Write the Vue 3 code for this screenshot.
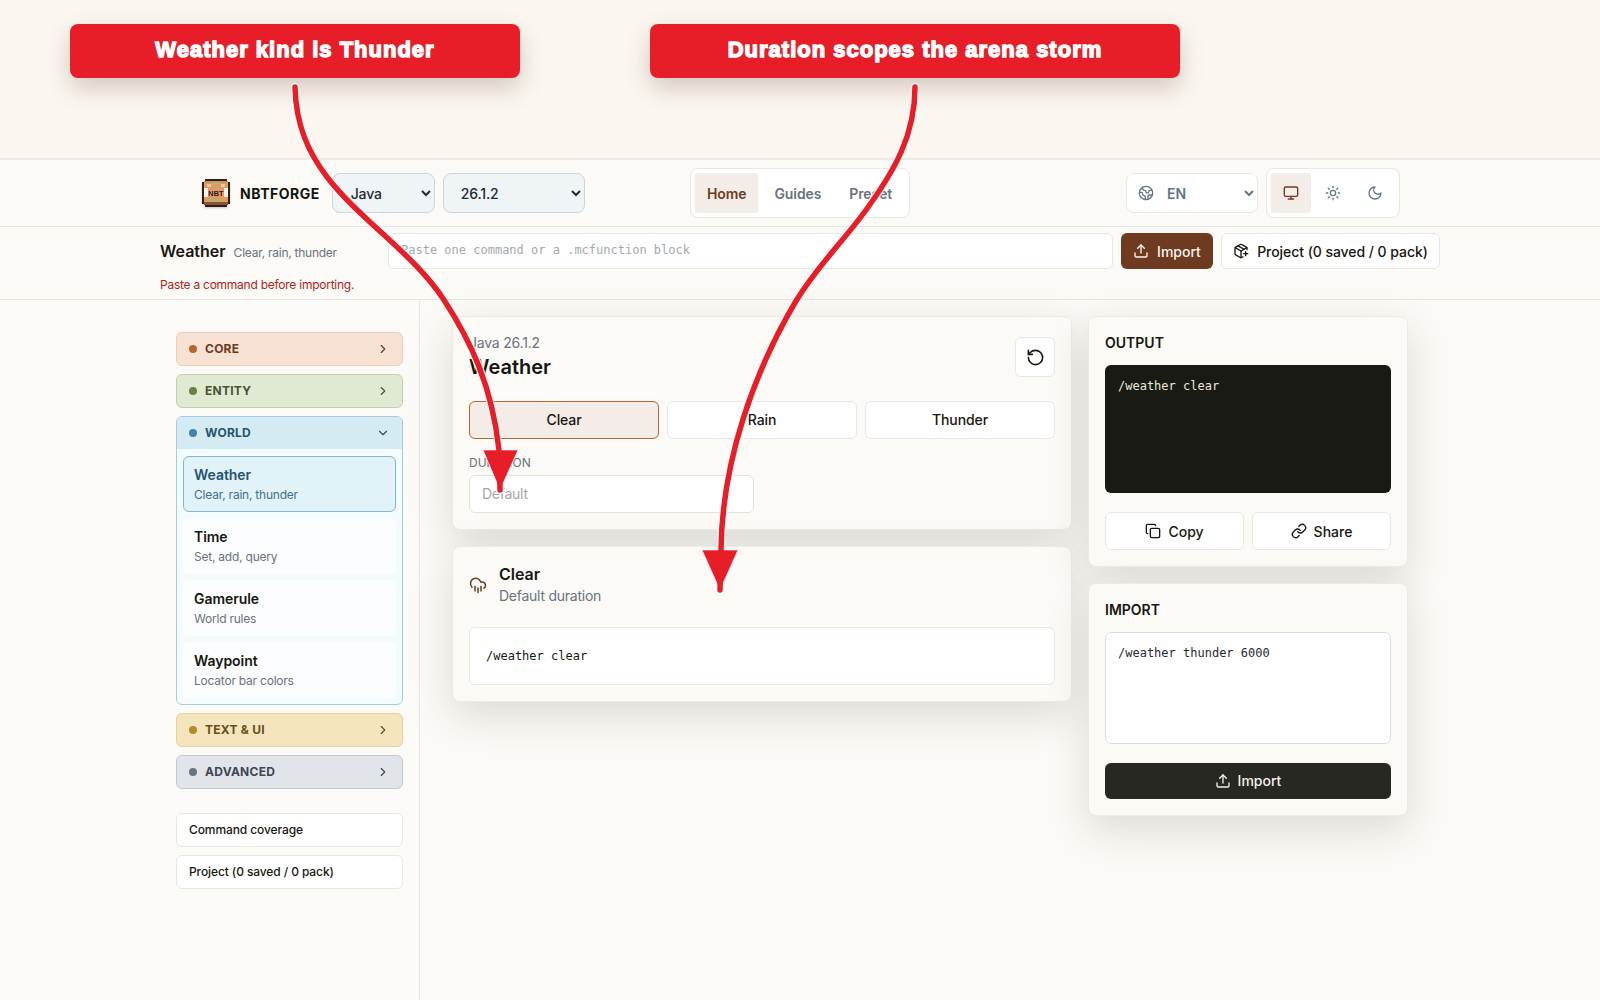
<script setup>
const icons = {
  upload: '<path d="M12 3v12"/><path d="m17 8-5-5-5 5"/><path d="M21 15v4a2 2 0 0 1-2 2H5a2 2 0 0 1-2-2v-4"/>',
  pkg: '<path d="M16 16h6"/><path d="M19 13v6"/><path d="M21 10V8a2 2 0 0 0-1-1.73l-7-4a2 2 0 0 0-2 0l-7 4A2 2 0 0 0 3 8v8a2 2 0 0 0 1 1.73l7 4a2 2 0 0 0 2 0l2-1.14"/><path d="m7.5 4.27 9 5.15"/><polyline points="3.29 7 12 12 20.71 7"/><line x1="12" x2="12" y1="22" y2="12"/>',
  reset: '<path d="M3 12a9 9 0 1 0 9-9 9.75 9.75 0 0 0-6.74 2.74L3 8"/><path d="M3 3v5h5"/>',
  copy: '<rect width="14" height="14" x="8" y="8" rx="2" ry="2"/><path d="M4 16c-1.1 0-2-.9-2-2V4c0-1.1.9-2 2-2h10c1.1 0 2 .9 2 2"/>',
  link: '<path d="M10 13a5 5 0 0 0 7.54.54l3-3a5 5 0 0 0-7.07-7.07l-1.72 1.71"/><path d="M14 11a5 5 0 0 0-7.54-.54l-3 3a5 5 0 0 0 7.07 7.07l1.71-1.71"/>',
  monitor: '<rect width="20" height="14" x="2" y="3" rx="2"/><line x1="8" x2="16" y1="21" y2="21"/><line x1="12" x2="12" y1="17" y2="21"/>',
  sun: '<circle cx="12" cy="12" r="4"/><path d="M12 2v2"/><path d="M12 20v2"/><path d="m4.93 4.93 1.41 1.41"/><path d="m17.66 17.66 1.41 1.41"/><path d="M2 12h2"/><path d="M20 12h2"/><path d="m6.34 17.66-1.41 1.41"/><path d="m19.07 4.93-1.41 1.41"/>',
  moon: '<path d="M12 3a6 6 0 0 0 9 9 9 9 0 1 1-9-9Z"/>',
  earth: '<path d="M21.54 15H17a2 2 0 0 0-2 2v4.54"/><path d="M7 3.34V5a3 3 0 0 0 3 3a2 2 0 0 1 2 2c0 1.1.9 2 2 2a2 2 0 0 0 2-2c0-1.1.9-2 2-2h3.17"/><path d="M11 21.95V18a2 2 0 0 0-2-2a2 2 0 0 1-2-2v-1a2 2 0 0 0-2-2H2.05"/><circle cx="12" cy="12" r="10"/>',
  rain: '<path d="M4 14.899A7 7 0 1 1 15.71 8h1.79a4.5 4.5 0 0 1 2.5 8.242"/><path d="M16 14v6"/><path d="M8 14v6"/><path d="M12 16v6"/>',
  right: '<path d="m9 18 6-6-6-6"/>',
  down: '<path d="m6 9 6 6 6-6"/>'
}
const worldItems = [
  { t: 'Weather', s: 'Clear, rain, thunder', active: true },
  { t: 'Time', s: 'Set, add, query' },
  { t: 'Gamerule', s: 'World rules' },
  { t: 'Waypoint', s: 'Locator bar colors' }
]
const arrows = [
  { d: 'M295 87C296 125 308 152 327 177C360 220 415 255 444 300C470 340 492 385 499 450L500 490', head: '483,450 518,450 500,490' },
  { d: 'M915 87C915 135 895 170 866 210C842 243 818 265 796 301C755 370 722 460 721 550L720 590', head: '702,550 738,550 720,590' }
]
</script>

<template>
  <div class="page">
    <section class="band">
      <div class="callout c1">Weather kind is Thunder</div>
      <div class="callout c2">Duration scopes the arena storm</div>
    </section>

    <header class="top">
      <div class="top-in">
        <div class="left">
          <svg class="logo" viewBox="0 0 28 28" shape-rendering="crispEdges">
            <rect x="3" y="0" width="22" height="28" fill="#2b2119"/>
            <rect x="0" y="3" width="28" height="22" fill="#2b2119"/>
            <rect x="2" y="2" width="24" height="23" fill="#e09b69"/>
            <rect x="3" y="2" width="22" height="2" fill="#cf8c5a"/>
            <rect x="9" y="3" width="10" height="2" fill="#a9b678"/>
            <rect x="2" y="9" width="4" height="9" fill="#fbf3e6"/>
            <rect x="22" y="9" width="4" height="9" fill="#fbf3e6"/>
            <rect x="5" y="5" width="4" height="3" fill="#f3c7a0"/>
            <rect x="19" y="5" width="4" height="3" fill="#f3c7a0"/>
            <rect x="8" y="20" width="12" height="2" fill="#9dbb73"/>
            <rect x="2" y="23" width="24" height="3" fill="#8b5331"/>
            <text x="14" y="16.5" text-anchor="middle" class="logo-t">NBT</text>
          </svg>
          <span class="brand">NBTFORGE</span>
          <select class="sel s1"><option>Java</option></select>
          <select class="sel s2"><option>26.1.2</option></select>
        </div>
        <nav class="nav">
          <a class="on">Home</a><a>Guides</a><a>Preset</a>
        </nav>
        <div class="right">
          <div class="lang">
            <svg class="ic i16 slate" viewBox="0 0 24 24" v-html="icons.earth"></svg>
            <select class="lang-sel"><option>EN</option></select>
          </div>
          <div class="theme">
            <button class="on"><svg class="ic i16" viewBox="0 0 24 24" v-html="icons.monitor"></svg></button>
            <button><svg class="ic i16" viewBox="0 0 24 24" v-html="icons.sun"></svg></button>
            <button><svg class="ic i16" viewBox="0 0 24 24" v-html="icons.moon"></svg></button>
          </div>
        </div>
      </div>
    </header>

    <section class="sub">
      <div class="sub-in">
        <div class="sub-row">
          <div class="sub-title"><strong>Weather</strong><span>Clear, rain, thunder</span></div>
          <input class="cmd" placeholder="Paste one command or a .mcfunction block" />
          <button class="imp"><svg class="ic i16" viewBox="0 0 24 24" v-html="icons.upload"></svg>Import</button>
          <button class="proj"><svg class="ic i16" viewBox="0 0 24 24" v-html="icons.pkg"></svg>Project (0 saved / 0 pack)</button>
        </div>
        <p class="err">Paste a command before importing.</p>
      </div>
    </section>

    <main class="main">
      <aside class="side">
        <div class="cat core"><i></i><b>CORE</b><svg class="ic i14" viewBox="0 0 24 24" v-html="icons.right"></svg></div>
        <div class="cat entity"><i></i><b>ENTITY</b><svg class="ic i14" viewBox="0 0 24 24" v-html="icons.right"></svg></div>
        <div class="world">
          <div class="cat wh"><i></i><b>WORLD</b><svg class="ic i14" viewBox="0 0 24 24" v-html="icons.down"></svg></div>
          <div class="wb">
            <div v-for="it in worldItems" :key="it.t" class="wi" :class="{ on: it.active }">
              <strong>{{ it.t }}</strong><span>{{ it.s }}</span>
            </div>
          </div>
        </div>
        <div class="cat text"><i></i><b>TEXT &amp; UI</b><svg class="ic i14" viewBox="0 0 24 24" v-html="icons.right"></svg></div>
        <div class="cat adv"><i></i><b>ADVANCED</b><svg class="ic i14" viewBox="0 0 24 24" v-html="icons.right"></svg></div>
        <div class="lnk first">Command coverage</div>
        <div class="lnk">Project (0 saved / 0 pack)</div>
      </aside>

      <div class="cols">
        <div class="col">
          <div class="card c-a">
            <div class="head">
              <div>
                <div class="ver">Java 26.1.2</div>
                <h1>Weather</h1>
              </div>
              <button class="reset"><svg class="ic i19" viewBox="0 0 24 24" v-html="icons.reset"></svg></button>
            </div>
            <div class="segs">
              <button class="on">Clear</button><button>Rain</button><button>Thunder</button>
            </div>
            <label class="lab">DURATION</label>
            <input class="dur" placeholder="Default" />
          </div>
          <div class="card c-b">
            <div class="res">
              <svg class="ic i18 brown" viewBox="0 0 24 24" v-html="icons.rain"></svg>
              <div><strong>Clear</strong><span>Default duration</span></div>
            </div>
            <div class="code">/weather clear</div>
          </div>
        </div>
        <div class="col">
          <div class="card c-o">
            <h2>OUTPUT</h2>
            <pre class="dark">/weather clear</pre>
            <div class="acts">
              <button><svg class="ic i16" viewBox="0 0 24 24" v-html="icons.copy"></svg>Copy</button>
              <button><svg class="ic i16" viewBox="0 0 24 24" v-html="icons.link"></svg>Share</button>
            </div>
          </div>
          <div class="card c-i">
            <h2>IMPORT</h2>
            <textarea class="ta" spellcheck="false">/weather thunder 6000</textarea>
            <button class="go"><svg class="ic i16" viewBox="0 0 24 24" v-html="icons.upload"></svg>Import</button>
          </div>
        </div>
      </div>
    </main>

    <svg class="overlay" width="1600" height="1000" viewBox="0 0 1600 1000">
      <g v-for="(a, n) in arrows" :key="n">
        <path :d="a.d" fill="none" stroke="#fff" stroke-opacity=".85" stroke-width="8" stroke-linecap="round"/>
        <polygon :points="a.head" fill="#e71d27" stroke="#fff" stroke-opacity=".6" stroke-width="1"/>
        <path :d="a.d" fill="none" stroke="#e71d27" stroke-width="5.5" stroke-linecap="round"/>
      </g>
    </svg>
  </div>
</template>

<style>
html, body { background: #fbfaf6; }
</style>

<style scoped>
* { box-sizing: border-box; }
.page { position: relative; width: 1600px; height: 1000px; overflow: hidden; background: #fbfaf6; font-family: Inter, "Liberation Sans", sans-serif; color: #17170f; font-size: 14px; }
button { font-family: inherit; cursor: pointer; }
h1, h2, p { margin: 0; }
.ic { fill: none; stroke: currentColor; stroke-width: 2; stroke-linecap: round; stroke-linejoin: round; flex: none; display: block; }
.i14 { width: 14px; height: 14px; }
.i16 { width: 16px; height: 16px; }
.i18 { width: 18px; height: 18px; }
.i19 { width: 19px; height: 19px; }
.slate { color: #64748b; }
.brown { color: #6e3a20; }

.band { height: 160px; background: #fbf7f0; border-bottom: 2px solid #efeadf; padding: 24px 0 0 70px; display: flex; gap: 130px; align-items: flex-start; }
.callout { height: 54px; background: #e71d27; border-radius: 8px; color: #fff; font-family: "Liberation Sans", sans-serif; font-weight: 700; font-size: 22px; -webkit-text-stroke: 1.4px #fff; display: flex; align-items: center; justify-content: center; padding-bottom: 3px; box-shadow: 0 10px 24px rgba(90, 50, 30, .24); letter-spacing: 1px; }
.c1 { width: 450px; }
.c2 { width: 530px; }

.top { height: 67px; border-bottom: 1px solid #e6e5e0; }
.top-in { width: 1200px; height: 66px; margin: 0 auto; display: grid; grid-template-columns: 1fr auto 1fr; align-items: center; }
.left { display: flex; align-items: center; }
.logo { width: 28px; height: 28px; margin-left: 2px; filter: drop-shadow(0 1px 1px rgba(0,0,0,.2)); }
.logo-t { font-family: "Liberation Sans", sans-serif; font-size: 7.5px; font-weight: 700; fill: #241a12; }
.brand { font-weight: 700; font-size: 14px; letter-spacing: .5px; margin: 0 12px 0 10px; color: #14140e; }
.sel { height: 40px; background: #eff4f7; border: 1px solid #cbd5dc; border-radius: 8px; font-family: inherit; font-size: 14px; font-weight: 500; color: #1f2a33; padding: 0 4px 0 14px; letter-spacing: -.15px; }
.s1 { width: 103px; margin-right: 8px; }
.s2 { width: 142px; padding-left: 13px; }
.nav { display: flex; align-items: center; gap: 4px; height: 50px; padding: 4px; background: #fff; border: 1px solid #e8e7e2; border-radius: 8px; justify-self: center; width: 220px; }
.nav a { height: 40px; display: flex; align-items: center; padding: 0 12px; font-weight: 600; color: #6b7280; font-size: 14px; border-radius: 3px; letter-spacing: -.1px; }
.nav a.on { background: #f4ede7; color: #6e3a20; }
.right { display: flex; align-items: center; justify-content: flex-end; gap: 8px; }
.lang { width: 132px; height: 40px; background: #fff; border: 1px solid #e8e7e2; border-radius: 8px; display: flex; align-items: center; padding-left: 11px; }
.lang-sel { flex: 1; min-width: 0; height: 36px; border: 0; background: transparent; font-family: inherit; font-size: 14px; font-weight: 600; color: #64748b; padding: 0 0 0 9px; outline: none; }
.theme { width: 134px; height: 50px; padding: 4px; display: flex; gap: 2px; background: #fff; border: 1px solid #e8e7e2; border-radius: 8px; }
.theme button { width: 40px; border: 0; background: transparent; display: flex; align-items: center; justify-content: center; color: #64748b; border-radius: 3px; padding: 0; }
.theme button.on { background: #f4ede7; color: #6e3a20; }

.sub { height: 73px; border-bottom: 1px solid #e6e5e0; }
.sub-in { width: 1280px; margin: 0 auto; padding-top: 6px; }
.sub-row { display: flex; align-items: center; height: 36px; }
.sub-title { width: 228px; display: flex; align-items: baseline; gap: 8px; }
.sub-title strong { font-size: 16px; font-weight: 600; }
.sub-title span { font-size: 12px; color: #6b7280; letter-spacing: -.25px; }
.cmd { width: 725px; height: 36px; border: 1px solid #e8e7e2; border-radius: 6px; background: #fff; padding: 0 12px 2px; font-family: "DejaVu Sans Mono", monospace; font-size: 12px; margin-right: 8px; outline: none; }
.cmd::placeholder { color: #a3a8ae; }
.imp { width: 92px; height: 36px; border: 0; border-radius: 6px; background: #6e3a20; color: #fdf8f2; font-size: 14px; font-weight: 500; display: flex; align-items: center; justify-content: center; gap: 8px; margin-right: 8px; padding: 0; }
.proj { width: 219px; height: 36px; border: 1px solid #e8e7e2; border-radius: 6px; background: #fff; color: #17170f; font-size: 14px; font-weight: 500; display: flex; align-items: center; justify-content: center; gap: 8px; padding: 0; letter-spacing: -.05px; }
.err { margin-top: 7px; font-size: 12px; line-height: 18px; color: #b42318; letter-spacing: -.25px; }

.main { width: 1280px; height: 700px; margin: 0 auto; display: flex; }
.side { width: 260px; height: 100%; padding: 32px 16px 0; border-right: 1px solid #e6e5e0; display: flex; flex-direction: column; gap: 8px; }
.cat { height: 34px; border: 1px solid; border-radius: 6px; display: flex; align-items: center; padding: 0 12px; font-size: 12px; }
.cat i { width: 8px; height: 8px; border-radius: 50%; margin-right: 8px; flex: none; }
.cat b { flex: 1; font-weight: 700; letter-spacing: .25px; padding-bottom: 1px; }
.core { background: #f6e1d2; border-color: #edcdb6; color: #6e3a20; }
.core i { background: #b5652f; }
.entity { background: #e0ead3; border-color: #c2cfb0; color: #46552e; }
.entity i { background: #6b7f47; }
.text { background: #f4e5bd; border-color: #e6d197; color: #6b4d15; }
.text i { background: #b8892c; }
.adv { background: #e1e5ea; border-color: #c3c8d0; color: #3f4654; }
.adv i { background: #6b7280; }
.world { border: 1px solid #a5cbe0; border-radius: 6px; background: #f4fbfe; overflow: hidden; }
.wh { border: 0; border-radius: 0; height: 32px; background: #d5ebf3; color: #1f5670; padding: 0 12px; }
.wh i { background: #3d85a8; }
.wb { padding: 7px 6px 6px; display: flex; flex-direction: column; gap: 6px; }
.wi { height: 56px; border-radius: 6px; background: #fcfdfe; border: 1px solid transparent; padding: 1px 10px 0; display: flex; flex-direction: column; justify-content: center; }
.wi strong { font-size: 14px; font-weight: 600; line-height: 20px; letter-spacing: -.05px; }
.wi span { font-size: 12px; line-height: 18px; margin-top: 1px; color: #6b7280; letter-spacing: -.22px; }
.wi.on { background: #e1f3f9; border-color: #85b5d0; }
.wi.on strong { color: #1f5670; }
.wi.on span { color: #44708a; }
.lnk { height: 34px; background: #fff; border: 1px solid #e8e7e2; border-radius: 6px; display: flex; align-items: center; padding: 0 12px 1px; font-size: 12px; font-weight: 500; letter-spacing: -.1px; }
.first { margin-top: 16px; }

.cols { padding: 16px 0 0 32px; display: grid; grid-template-columns: 620px 320px; column-gap: 16px; align-items: start; }
.col { display: flex; flex-direction: column; gap: 16px; }
.card { background: #fbfaf6; border: 1px solid #ebeae5; border-radius: 8px; padding: 16px; box-shadow: 0 14px 40px rgba(50, 50, 35, .15); }
.head { display: flex; justify-content: space-between; align-items: center; }
.ver { font-size: 14px; line-height: 20px; color: #6b7280; letter-spacing: -.2px; }
h1 { font-size: 20px; line-height: 28px; font-weight: 600; }
.reset { width: 40px; height: 40px; background: #fff; border: 1px solid #e8e7e2; border-radius: 6px; display: flex; align-items: center; justify-content: center; padding: 0; color: #17170f; }
.segs { display: grid; grid-template-columns: repeat(3, 1fr); gap: 8px; margin-top: 20px; }
.segs button { height: 38px; background: #fff; border: 1px solid #e8e7e2; border-radius: 6px; font-size: 14px; font-weight: 500; color: #17170f; padding: 0 0 1px; letter-spacing: -.1px; }
.segs button.on { background: #f4ece6; border-color: #b5652f; }
.lab { display: block; margin-top: 16px; font-size: 12px; line-height: 16px; font-weight: 400; color: #6b7280; }
.dur { display: block; width: 285px; height: 38px; margin-top: 4px; background: #fff; border: 1px solid #e2e2dd; border-radius: 6px; padding: 0 12px 1px; font-family: inherit; font-size: 14px; outline: none; letter-spacing: -.25px; }
.dur::placeholder { color: #a3a8ae; }
.res { display: flex; align-items: center; gap: 12px; }
.res strong { display: block; font-size: 16px; line-height: 22px; font-weight: 600; }
.res span { display: block; font-size: 14px; line-height: 20px; color: #6b7280; margin-top: 1px; letter-spacing: -.25px; }
.code { height: 58px; margin-top: 21px; background: #fff; border: 1px solid #e8e7e2; border-radius: 6px; display: flex; align-items: center; padding: 0 16px; font-family: "DejaVu Sans Mono", monospace; font-size: 12px; }
h2 { font-size: 14px; line-height: 20px; font-weight: 600; }
.dark { margin: 12px 0 0; height: 128px; background: #1a1a14; border-radius: 6px; padding: 13px; font-family: "DejaVu Sans Mono", monospace; font-size: 12px; line-height: 16px; color: #ece9dc; }
.acts { display: grid; grid-template-columns: 1fr 1fr; gap: 8px; margin-top: 19px; }
.acts button { height: 38px; background: #fff; border: 1px solid #e8e7e2; border-radius: 6px; font-size: 14px; font-weight: 500; color: #17170f; display: flex; align-items: center; justify-content: center; gap: 7px; padding: 0; }
.ta { display: block; width: 100%; height: 112px; margin-top: 12px; background: #fff; border: 1px solid #dfdfda; border-radius: 6px; padding: 12px; font-family: "DejaVu Sans Mono", monospace; font-size: 12px; line-height: 16px; color: #1f2a33; resize: none; outline: none; }
.go { width: 100%; height: 36px; margin-top: 19px; border: 0; border-radius: 6px; background: #272822; color: #f5f2e8; font-size: 14px; font-weight: 500; display: flex; align-items: center; justify-content: center; gap: 7px; padding: 0 0 1px; }
.overlay { position: absolute; left: 0; top: 0; pointer-events: none; z-index: 5; }
</style>
